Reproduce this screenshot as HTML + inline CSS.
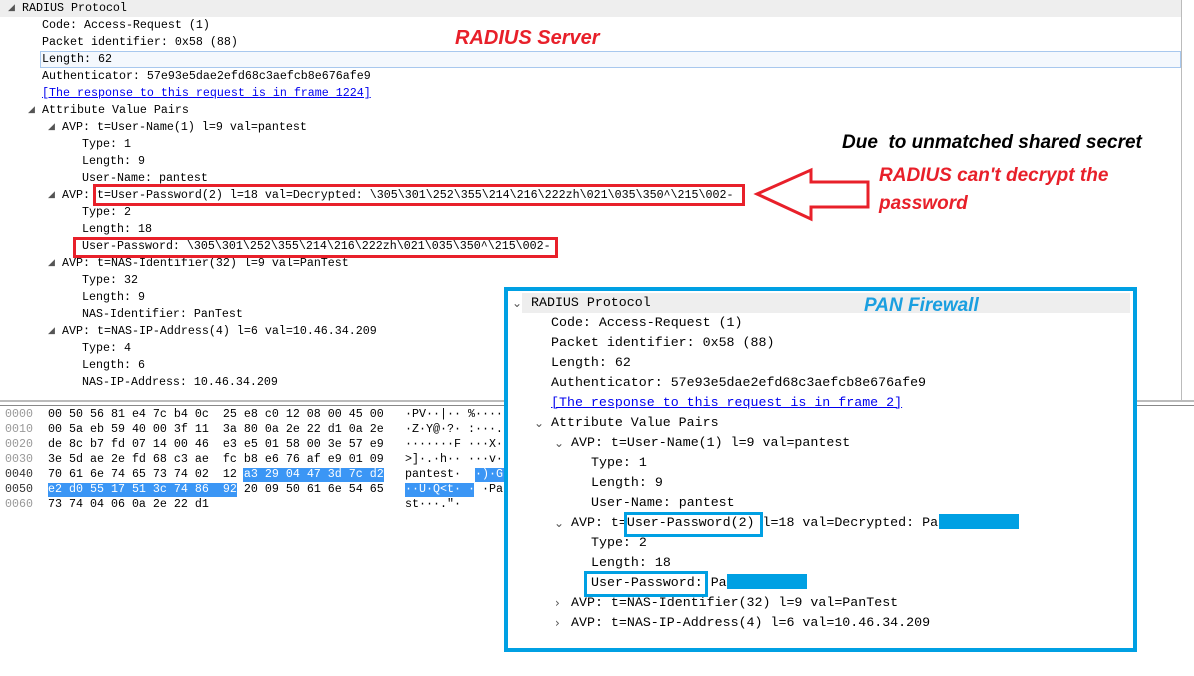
<!DOCTYPE html>
<html><head><meta charset="utf-8"><style>
body{margin:0;width:1194px;height:676px;background:#fff;position:relative;overflow:hidden;font-family:"Liberation Mono",monospace;}
.t{position:absolute;font-size:11.67px;line-height:17px;white-space:pre;color:#000;}
.h{position:absolute;font-size:11.67px;line-height:15px;white-space:pre;color:#000;}
.ar{position:absolute;font-size:9px;line-height:17px;color:#555;font-family:"DejaVu Sans",sans-serif;}
.f{position:absolute;font-size:13.3px;line-height:20px;white-space:pre;color:#000;}
.fa{position:absolute;font-size:12px;line-height:20px;color:#555;font-family:"DejaVu Sans",sans-serif;}
.lbl{position:absolute;font-family:"Liberation Sans",sans-serif;font-style:italic;font-weight:bold;white-space:pre;}
.box{position:absolute;box-sizing:border-box;}
a{color:#00e;text-decoration:underline;}
</style></head><body>
<div style="position:absolute;left:0;top:0;width:1181px;height:17px;background:#eeeeee"></div>
<div class="box" style="left:40px;top:51px;width:1141px;height:17px;border:1px solid #a8c8ee;background:#f4f8fd"></div>
<div style="position:absolute;left:1181px;top:0;width:1px;height:400px;background:#bbb"></div>
<div style="position:absolute;left:0;top:400px;width:1194px;height:2px;background:#bbb"></div>
<div style="position:absolute;left:0;top:405px;width:1194px;height:1px;background:#888"></div>
<div class="ar" style="left:8px;top:0">◢</div>
<div class="t" style="left:22px;top:0">RADIUS Protocol</div>
<div class="t" style="left:42px;top:17px">Code: Access-Request (1)
Packet identifier: 0x58 (88)
Length: 62
Authenticator: 57e93e5dae2efd68c3aefcb8e676afe9
<a>[The response to this request is in frame 1224]</a></div>
<div class="ar" style="left:28px;top:102px">◢</div>
<div class="t" style="left:42px;top:102px">Attribute Value Pairs</div>
<div class="ar" style="left:48px;top:119px">◢</div>
<div class="t" style="left:62px;top:119px">AVP: t=User-Name(1) l=9 val=pantest</div>
<div class="t" style="left:82px;top:136px">Type: 1
Length: 9
User-Name: pantest</div>
<div class="ar" style="left:48px;top:187px">◢</div>
<div class="t" style="left:62px;top:187px">AVP: t=User-Password(2) l=18 val=Decrypted: \305\301\252\355\214\216\222zh\021\035\350^\215\002-</div>
<div class="t" style="left:82px;top:204px">Type: 2
Length: 18
User-Password: \305\301\252\355\214\216\222zh\021\035\350^\215\002-</div>
<div class="ar" style="left:48px;top:255px">◢</div>
<div class="t" style="left:62px;top:255px">AVP: t=NAS-Identifier(32) l=9 val=PanTest</div>
<div class="t" style="left:82px;top:272px">Type: 32
Length: 9
NAS-Identifier: PanTest</div>
<div class="ar" style="left:48px;top:323px">◢</div>
<div class="t" style="left:62px;top:323px">AVP: t=NAS-IP-Address(4) l=6 val=10.46.34.209</div>
<div class="t" style="left:82px;top:340px">Type: 4
Length: 6
NAS-IP-Address: 10.46.34.209</div>
<!-- hex -->
<div style="position:absolute;left:243px;top:468px;width:141px;height:14px;background:#3b96f5"></div>
<div style="position:absolute;left:48px;top:483px;width:189px;height:14px;background:#3b96f5"></div>
<div style="position:absolute;left:475px;top:468px;width:37px;height:14px;background:#3b96f5"></div>
<div style="position:absolute;left:405px;top:483px;width:69px;height:14px;background:#3b96f5"></div>
<div class="h" style="left:5px;top:407px;color:#999">0000
0010
0020
0030
<span style="color:#333">0040
0050</span>
0060</div>
<div class="h" style="left:48px;top:407px">00 50 56 81 e4 7c b4 0c  25 e8 c0 12 08 00 45 00
00 5a eb 59 40 00 3f 11  3a 80 0a 2e 22 d1 0a 2e
de 8c b7 fd 07 14 00 46  e3 e5 01 58 00 3e 57 e9
3e 5d ae 2e fd 68 c3 ae  fc b8 e6 76 af e9 01 09
70 61 6e 74 65 73 74 02  12 <span style="color:#fff">a3 29 04 47 3d 7c d2</span>
<span style="color:#fff">e2 d0 55 17 51 3c 74 86  92</span> 20 09 50 61 6e 54 65
73 74 04 06 0a 2e 22 d1</div>
<div class="h" style="left:405px;top:407px">·PV··|·· %····
·Z·Y@·?· :···."
·······F ···X··
>]·.·h·· ···v··
pantest· <span style="color:#fff">··)·G</span>
<span style="color:#fff">··U·Q&lt;t· ·</span> ·Pa
st···."·</div>
<!-- red annotations -->
<div class="lbl" style="left:455px;top:27px;font-size:20px;color:#e8202a">RADIUS Server</div>
<div class="lbl" style="left:842px;top:132px;font-size:19px;color:#000">Due  to unmatched shared secret</div>
<div class="lbl" style="left:879px;top:162px;font-size:19px;color:#e8202a;line-height:28px">RADIUS can't decrypt the
password</div>
<div class="box" style="left:93px;top:184px;width:652px;height:22px;border:3px solid #e8202a"></div>
<div class="box" style="left:73px;top:237px;width:485px;height:21px;border:3px solid #e8202a"></div>
<svg style="position:absolute;left:0;top:0" width="1194" height="676"><polygon points="757,194 811,170 811,182 868,182 868,207 811,207 811,219" fill="#fff" stroke="#e8202a" stroke-width="3"/></svg>
<!-- firewall panel -->
<div style="position:absolute;left:506px;top:289px;width:629px;height:361px;background:#fff"></div>
<div style="position:absolute;left:522px;top:293px;width:608px;height:20px;background:#eeeeee"></div>
<div class="fa" style="left:512px;top:293px">⌄</div>
<div class="f" style="left:531px;top:293px">RADIUS Protocol</div>
<div class="f" style="left:551px;top:313px">Code: Access-Request (1)
Packet identifier: 0x58 (88)
Length: 62
Authenticator: 57e93e5dae2efd68c3aefcb8e676afe9
<a>[The response to this request is in frame 2]</a></div>
<div class="fa" style="left:534px;top:413px">⌄</div>
<div class="f" style="left:551px;top:413px">Attribute Value Pairs</div>
<div class="fa" style="left:554px;top:433px">⌄</div>
<div class="f" style="left:571px;top:433px">AVP: t=User-Name(1) l=9 val=pantest</div>
<div class="f" style="left:591px;top:453px">Type: 1
Length: 9
User-Name: pantest</div>
<div class="fa" style="left:554px;top:513px">⌄</div>
<div class="f" style="left:571px;top:513px">AVP: t=User-Password(2) l=18 val=Decrypted: Pa</div>
<div class="f" style="left:591px;top:533px">Type: 2
Length: 18
User-Password: Pa</div>
<div class="fa" style="left:555px;top:593px">›<br>›</div>
<div class="f" style="left:571px;top:593px">AVP: t=NAS-Identifier(32) l=9 val=PanTest
AVP: t=NAS-IP-Address(4) l=6 val=10.46.34.209</div>
<div style="position:absolute;left:939px;top:514px;width:80px;height:15px;background:#00a0e3"></div>
<div style="position:absolute;left:727px;top:574px;width:80px;height:15px;background:#00a0e3"></div>
<div class="box" style="left:624px;top:512px;width:139px;height:25px;border:3px solid #00a0e3"></div>
<div class="box" style="left:584px;top:571px;width:124px;height:26px;border:3px solid #00a0e3"></div>
<div class="lbl" style="left:864px;top:295px;font-size:19px;color:#1a9fe0">PAN Firewall</div>
<div class="box" style="left:504px;top:287px;width:633px;height:365px;border:4px solid #00a0e3"></div>
</body></html>
